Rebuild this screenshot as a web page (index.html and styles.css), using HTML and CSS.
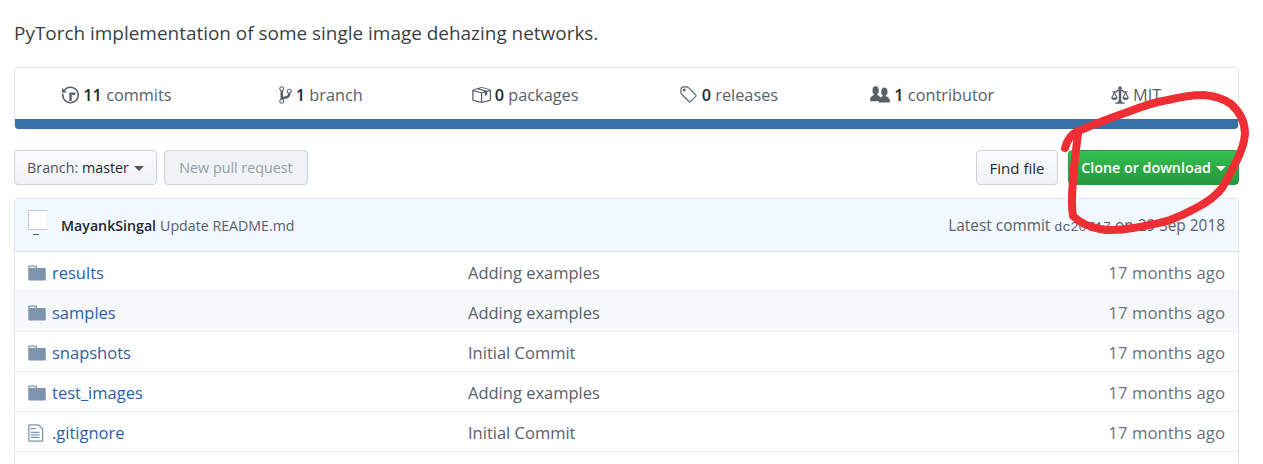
FILE: index.html
```html
<!DOCTYPE html>
<html lang="en">
<head>
  <meta charset="UTF-8">
  <title>PyTorch dehazing networks</title>
  <link rel="stylesheet" href="styles.css">
</head>
<body>
  <p class="description">PyTorch implementation of some single image dehazing networks.</p>

  <div class="summary">
    <ul class="stats">
      <li><svg class="icon" width="17" height="20" viewBox="0 0 14 16"><path d="M8 13H6V6h5v2H8v5zM7 1C4.81 1 2.87 2.02 1.59 3.59L0 2v4h4L2.5 4.5C3.55 3.17 5.17 2.3 7 2.3c3.14 0 5.7 2.56 5.7 5.7s-2.56 5.7-5.7 5.7A5.71 5.71 0 0 1 1.3 8c0-.34.03-.67.09-1H.08C.03 7.33 0 7.66 0 8c0 3.86 3.14 7 7 7s7-3.14 7-7-3.14-7-7-7z"/></svg><b>11</b> commits</li>
      <li><svg class="icon" width="13" height="20" viewBox="0 0 10 16"><path d="M10 5c0-1.11-.89-2-2-2a1.993 1.993 0 0 0-1 3.72v.3c-.02.52-.23.98-.63 1.38-.4.4-.86.61-1.38.63-.83.02-1.48.16-2 .45V4.72a1.993 1.993 0 0 0-1-3.72C.88 1 0 1.89 0 3a2 2 0 0 0 1 1.72v6.56c-.59.35-1 .99-1 1.72 0 1.11.89 2 2 2 1.11 0 2-.89 2-2 0-.53-.2-1-.53-1.36.09-.06.48-.41.59-.47.25-.11.56-.17.94-.17 1.05-.05 1.95-.45 2.75-1.25S8.95 7.77 9 6.73h-.02C9.59 6.37 10 5.73 10 5zM2 1.8c.66 0 1.2.55 1.2 1.2 0 .65-.55 1.2-1.2 1.2C1.35 4.2.8 3.65.8 3c0-.65.55-1.2 1.2-1.2zm0 12.41c-.66 0-1.2-.55-1.2-1.2 0-.65.55-1.2 1.2-1.2.65 0 1.2.55 1.2 1.2 0 .65-.55 1.2-1.2 1.2zm6-8c-.66 0-1.2-.55-1.2-1.2 0-.65.55-1.2 1.2-1.2.65 0 1.2.55 1.2 1.2 0 .65-.55 1.2-1.2 1.2z"/></svg><b>1</b> branch</li>
      <li><svg class="icon" width="20" height="20" viewBox="0 0 16 16"><path d="M1 4.27v7.47c0 .45.3.84.75.97l6.5 1.73c.16.05.34.05.5 0l6.5-1.73c.45-.13.75-.52.75-.97V4.27c0-.45-.3-.84-.75-.97l-6.5-1.74a1.4 1.4 0 0 0-.5 0L1.75 3.3c-.45.13-.75.52-.75.97zm7 9.09l-6-1.59V5l6 1.61v6.75zM2 4l2.5-.67L11 5.06l-2.5.67L2 4zm13 7.77l-6 1.59V6.61l2-.55V8.5l2-.53V5.53L15 5v6.77zm-2-7.24L6.5 2.8l2-.53L15 4l-2 .53z"/></svg><b>0</b> packages</li>
      <li><svg class="icon" width="19" height="20" viewBox="0 0 15 16"><path d="M7.73 1.73C7.26 1.26 6.62 1 5.96 1H3.5C2.13 1 1 2.13 1 3.5v2.47c0 .66.27 1.3.73 1.77l6.06 6.06c.39.39 1.02.39 1.41 0l4.59-4.59a.996.996 0 0 0 0-1.41L7.73 1.73zM2.38 7.09c-.31-.3-.47-.7-.47-1.13V3.5c0-.88.72-1.59 1.59-1.59h2.47c.42 0 .83.16 1.13.47l6.14 6.13-4.73 4.73-6.13-6.15zM3.01 3h2v2H3V3h.01z"/></svg><b>0</b> releases</li>
      <li><svg class="icon" width="20" height="20" viewBox="0 0 16 16"><path d="M16 12.999c0 .439-.45 1-1 1H7.995c-.539 0-.994-.447-.995-.999H1c-.54 0-1-.561-1-1 0-2.634 3-4 3-4s.229-.409 0-1c-.841-.621-1.058-.59-1-3 .058-2.419 1.367-3 2.5-3s2.442.58 2.5 3c.058 2.41-.159 2.379-1 3-.229.59 0 1 0 1s1.549.711 2.42 2.088C9.196 9.369 10 8.999 10 8.999s.229-.409 0-1c-.841-.62-1.058-.59-1-3 .058-2.419 1.367-3 2.5-3s2.437.581 2.495 3c.059 2.41-.158 2.38-1 3-.229.59 0 1 0 1s3.005 1.366 3.005 4z"/></svg><b>1</b> contributor</li>
      <li><svg class="icon" width="18" height="20" viewBox="0 0 14 16"><path d="M7 4c-.83 0-1.5-.67-1.5-1.5S6.17 1 7 1s1.5.67 1.5 1.5S7.83 4 7 4zm7 6c0 1.11-.89 2-2 2h-1c-1.11 0-2-.89-2-2l2-4h-1c-.55 0-1-.45-1-1H8v8c.42 0 1 .45 1 1h1c.42 0 1 .45 1 1H3c0-.55.58-1 1-1h1c0-.55.58-1 1-1h.03L6 5H5c0 .55-.45 1-1 1H3l2 4c0 1.11-.89 2-2 2H2c-1.11 0-2-.89-2-2l2-4H1V5h3c0-.55.45-1 1-1h4c.55 0 1 .45 1 1h3v1h-1l2 4zM2.5 7L1 10h3L2.5 7zM13 10l-1.5-3-1.5 3h3z"/></svg>MIT</li>
    </ul>
    <div class="lang-bar"></div>
  </div>

  <div class="toolbar">
    <button class="btn btn-branch">Branch: <b>master</b><i class="caret"></i></button>
    <button class="btn btn-disabled">New pull request</button>
    <span class="spacer"></span>
    <button class="btn btn-find">Find file</button>
    <button class="btn btn-clone">Clone or download<i class="caret"></i></button>
  </div>

  <div class="files">
    <div class="commit">
      <span class="avatar"></span>
      <b class="author">MayankSingal</b>
      <span class="commit-msg">Update README.md</span>
      <span class="latest">Latest commit <code>dc20717</code> on 29 Sep 2018</span>
    </div>
    <div class="row">
      <svg class="file-icon" width="18" height="20" viewBox="0 0 14 16"><path d="M13 4H7V3c0-.66-.31-1-1-1H1c-.55 0-1 .45-1 1v10c0 .55.45 1 1 1h12c.55 0 1-.45 1-1V5c0-.55-.45-1-1-1zM6 4H1V3h5v1z"/></svg>
      <a class="name">results</a><span class="msg">Adding examples</span><span class="age">17 months ago</span>
    </div>
    <div class="row">
      <svg class="file-icon" width="18" height="20" viewBox="0 0 14 16"><path d="M13 4H7V3c0-.66-.31-1-1-1H1c-.55 0-1 .45-1 1v10c0 .55.45 1 1 1h12c.55 0 1-.45 1-1V5c0-.55-.45-1-1-1zM6 4H1V3h5v1z"/></svg>
      <a class="name">samples</a><span class="msg">Adding examples</span><span class="age">17 months ago</span>
    </div>
    <div class="row">
      <svg class="file-icon" width="18" height="20" viewBox="0 0 14 16"><path d="M13 4H7V3c0-.66-.31-1-1-1H1c-.55 0-1 .45-1 1v10c0 .55.45 1 1 1h12c.55 0 1-.45 1-1V5c0-.55-.45-1-1-1zM6 4H1V3h5v1z"/></svg>
      <a class="name">snapshots</a><span class="msg">Initial Commit</span><span class="age">17 months ago</span>
    </div>
    <div class="row">
      <svg class="file-icon" width="18" height="20" viewBox="0 0 14 16"><path d="M13 4H7V3c0-.66-.31-1-1-1H1c-.55 0-1 .45-1 1v10c0 .55.45 1 1 1h12c.55 0 1-.45 1-1V5c0-.55-.45-1-1-1zM6 4H1V3h5v1z"/></svg>
      <a class="name">test_images</a><span class="msg">Adding examples</span><span class="age">17 months ago</span>
    </div>
    <div class="row">
      <svg class="file-icon" width="18" height="20" viewBox="0 0 14 16"><path d="M6 5H2V4h4v1zM2 8h7V7H2v1zm0 2h7V9H2v1zm0 2h7v-1H2v1zm10-7.5V14c0 .55-.45 1-1 1H1c-.55 0-1-.45-1-1V2c0-.55.45-1 1-1h7.5L12 4.5zM11 5L8 2H1v12h10V5z"/></svg>
      <a class="name">.gitignore</a><span class="msg">Initial Commit</span><span class="age">17 months ago</span>
    </div>
    <div class="row-cut"></div>
  </div>

  <!-- hand drawn circle on top of the page -->
  <svg class="scribble" width="1263" height="464" viewBox="0 0 1263 464">
    <path d="M1065 148 C1067 141 1070 135 1076 132 C1090 126 1110 118 1125 113 C1140 107 1155 102 1168 100 C1180 97 1192 95 1204 95 C1216 96 1224 99 1231 104 C1240 112 1245 122 1245 134 C1244 145 1241 152 1237 160 C1232 170 1227 180 1222 188 C1215 197 1206 203 1196 208 C1187 213 1178 217 1170 220 C1158 224 1145 226 1133 228 C1122 230 1110 231 1100 229 C1090 227 1080 223 1073 216 C1071 205 1072 192 1073 180 C1074 165 1076 150 1078 134"/>
  </svg>
</body>
</html>
```

FILE: styles.css
```css
* {
  box-sizing: border-box;
}
html, body {
  height: 464px;
  overflow: hidden;
}
body {
  margin: 0;
  padding: 0 24px 0 14px;
  background-color: #fff;
  color: #24292e;
  font-family: 'Open Sans', 'Noto Sans', sans-serif;
  font-size: 16.5px;
  position: relative;
}
b {
  font-weight: 600;
}
.description {
  margin: 0;
  height: 67px;
  padding-top: 20px;
  font-size: 18.95px;
  line-height: 26px;
  color: #3a3f44;
}
.summary {
  border: 1px solid #e1e4e8;
  border-bottom: none;
  border-radius: 4px;
  overflow: hidden;
}
.stats {
  list-style: none;
  margin: 0;
  padding: 2px 0 0;
  height: 51px;
  display: grid;
  grid-template-columns: repeat(6, 1fr);
  color: #586069;
  font-size: 16.3px;
}
.stats li {
  display: flex;
  align-items: center;
  justify-content: center;
  white-space: pre-wrap;
}
.stats b {
  color: #24292e;
}
.icon {
  fill: #586069;
  margin-right: 4px;
}
.lang-bar {
  height: 10px;
  margin: 0 -1px;
  background-color: #3572a5;
  border-radius: 0 0 4px 4px;
}
.toolbar {
  display: flex;
  gap: 7px;
  margin-top: 21px;
  height: 35px;
}
.spacer {
  flex: 1;
}
.btn {
  font-family: inherit;
  font-size: 14.3px;
  height: 35px;
  padding: 0 13px;
  border: 1px solid #cfd2d6;
  border-radius: 4px;
  background: linear-gradient(#fafbfc, #eff3f6);
  color: #24292e;
  white-space: pre;
}
.btn-branch {
  width: 143px;
  padding: 0;
  color: #4d545b;
}
.btn-branch b {
  color: #24292e;
  font-weight: 400;
}
.btn-disabled {
  width: 144px;
  padding: 0;
  color: #959da5;
  background: #eff3f6;
}
.btn-find {
  width: 82px;
  margin-right: 3px;
  padding: 0;
  font-size: 15px;
}
.btn-clone {
  width: 171px;
  padding: 0 8px;
  color: #fff;
  font-weight: 600;
  border-color: #2a9a44;
  background: linear-gradient(#34c14f, #28963e);
}
.caret {
  display: inline-block;
  margin-left: 5px;
  vertical-align: 2px;
  border: 5px solid transparent;
  border-top-color: currentColor;
  border-bottom: 0;
}
.files {
  margin-top: 13px;
  border: 1px solid #e1e4e8;
  border-bottom: none;
  border-radius: 4px 4px 0 0;
}
.commit {
  height: 53px;
  display: flex;
  align-items: center;
  padding: 0 13px;
  background-color: #f1f8ff;
  border-bottom: 1px solid #c8e1ff;
}
.avatar {
  position: relative;
  align-self: flex-start;
  width: 20px;
  height: 20px;
  margin: 11px 13px 0 0;
  background-color: #fff;
  border: 1px solid #c4c8cc;
  border-right-color: #f1f1f1;
}
.avatar::after {
  content: "";
  position: absolute;
  left: 4px;
  top: 23px;
  width: 6px;
  height: 1px;
  background-color: #5a6067;
}
.author {
  font-size: 14.2px;
  color: #24292e;
  margin-right: 4px;
}
.commit-msg {
  font-size: 14.2px;
  color: #586069;
}
.latest {
  margin-left: auto;
  font-size: 15.4px;
  color: #586069;
}
.latest code {
  font-family: 'Liberation Mono', monospace;
  font-size: 13.5px;
}
.row {
  height: 40px;
  display: flex;
  align-items: center;
  padding: 2px 13px 0;
  border-bottom: 1px solid #eaecef;
  color: #586069;
}
.row:nth-child(3) {
  background-color: #f6f8fa;
}
.row-cut {
  height: 12px;
}
.file-icon {
  fill: #7d94ae;
  margin-right: 6px;
  flex: none;
}
.name {
  width: 416px;
  color: #2a5fac;
}
.msg {
  flex: 1;
}
.age {
  font-size: 16.8px;
  color: #6a737d;
}
.scribble {
  position: absolute;
  left: 0;
  top: 0;
  pointer-events: none;
}
.scribble path {
  fill: none;
  stroke: #ee2e33;
  stroke-width: 8;
  stroke-linecap: round;
  stroke-linejoin: round;
}
```
